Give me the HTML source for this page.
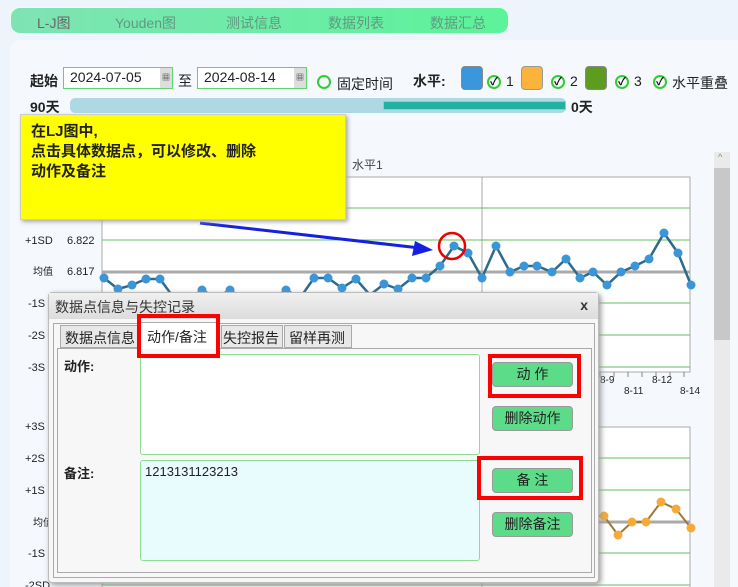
<!DOCTYPE html>
<html><head><meta charset="utf-8"><style>
*{box-sizing:border-box;margin:0;padding:0}
body{width:738px;height:587px;overflow:hidden;background:#eef4fb;font-family:"Liberation Sans","Noto Sans CJK SC",sans-serif;font-size:13px;color:#222;position:relative}
.a{position:absolute}
.tabs{left:10px;top:7px;width:499px;height:27px;border-radius:10px;background:linear-gradient(90deg,#7fe3b4,#5cf39a);border:1px solid #e8fff0}
.tabs span{position:absolute;top:5px;font-size:14px;color:#5f9a80}
.panel{left:10px;top:40px;width:728px;height:547px;background:#f5f9fe;border-radius:10px 0 0 0}
.inp{height:22px;border:1px solid #5fd36f;background:#fff;font-size:14px;padding:1px 6px}
.cal{position:absolute;right:0;top:0;width:12px;height:20px;background:#ddd;font-size:8px;text-align:center;line-height:20px}
.sw{width:22px;height:24px;border-radius:4px}
.ck{position:absolute;width:14px;height:14px;border:2px solid #3c3;border-radius:50%;font-size:11px;line-height:10px;text-align:center;font-weight:bold;color:#111}
.btn{position:absolute;left:492px;width:81px;height:25px;background:#5cdc88;border:1px solid #999;border-radius:4px;text-align:center;line-height:23px;font-size:14px;color:#222}
.red{position:absolute;border:4px solid #f00}
</style></head><body>
<div class="a tabs">
<span style="left:26px;color:#666">L-J图</span><span style="left:104px">Youden图</span><span style="left:215px">测试信息</span><span style="left:317px">数据列表</span><span style="left:419px">数据汇总</span>
</div>
<div class="a panel"></div>
<div class="a" style="left:30px;top:71px;font-size:14px;font-weight:bold">起始</div>
<div class="a inp" style="left:63px;top:67px;width:110px">2024-07-05<div class="cal">▦</div></div>
<div class="a" style="left:178px;top:71px;font-size:14px">至</div>
<div class="a inp" style="left:197px;top:67px;width:110px">2024-08-14<div class="cal">▦</div></div>
<div class="a" style="left:317px;top:75px;width:14px;height:14px;border:2px solid #3c3;border-radius:50%"></div>
<div class="a" style="left:337px;top:74px;font-size:14px">固定时间</div>
<div class="a" style="left:413px;top:71px;font-size:14px;font-weight:bold">水平:</div>
<div class="a sw" style="left:461px;top:66px;background:#3a97db;border:1px solid #888"></div>
<div class="ck" style="left:487px;top:75px">✓</div><div class="a" style="left:506px;top:73px;font-size:14px">1</div>
<div class="a sw" style="left:521px;top:66px;background:#fbb33c;border:1px solid #999"></div>
<div class="ck" style="left:551px;top:75px">✓</div><div class="a" style="left:570px;top:73px;font-size:14px">2</div>
<div class="a sw" style="left:585px;top:66px;background:#5e9c1f;border:1px solid #888"></div>
<div class="ck" style="left:615px;top:75px">✓</div><div class="a" style="left:634px;top:73px;font-size:14px">3</div>
<div class="ck" style="left:653px;top:75px">✓</div><div class="a" style="left:672px;top:73px;font-size:14px">水平重叠</div>
<div class="a" style="left:30px;top:97px;font-size:14px;font-weight:bold">90天</div>
<div class="a" style="left:70px;top:98px;width:496px;height:15px;background:#aed8e3;border-radius:5px"></div>
<div class="a" style="left:383px;top:101px;width:183px;height:9px;background:#22b0a0;border:1px solid #bbb"></div>
<div class="a" style="left:571px;top:97px;font-size:14px;font-weight:bold">0天</div>
<div class="a" style="left:714px;top:152px;width:16px;height:435px;background:#eaeaea"></div>
<div class="a" style="left:714px;top:168px;width:16px;height:172px;background:#c8c8c8"></div>
<div class="a" style="left:718px;top:152px;font-size:9px;color:#888">^</div>
<svg class="a" style="left:0;top:0" width="738" height="587">
<g font-size="11" fill="#222">
<text x="352" y="169" font-size="12" fill="#444">水平1</text>
<rect x="102" y="177" width="588" height="195" fill="#fff" stroke="#aaa"/>
<line x1="482" y1="177" x2="482" y2="372" stroke="#aaa"/>
<g stroke="#63c25d"><line x1="102" y1="208" x2="690" y2="208"/><line x1="102" y1="240" x2="690" y2="240"/><line x1="102" y1="303" x2="690" y2="303"/><line x1="102" y1="335" x2="690" y2="335"/><line x1="102" y1="367" x2="690" y2="367"/></g>
<line x1="102" y1="272" x2="690" y2="272" stroke="#aaa" stroke-width="3"/>
<text x="25" y="244">+1SD</text><text x="67" y="244">6.822</text>
<text x="33" y="275" font-size="10">均值</text><text x="67" y="275">6.817</text>
<text x="28" y="307">-1S</text><text x="28" y="339">-2S</text><text x="28" y="371">-3S</text>
<polyline fill="none" stroke="#2e6a8a" stroke-width="2.5" points="104,278 118,289 132,285 146,279 160,279 174,298 188,300 202,290 216,298 230,290 244,300 258,298 272,300 286,290 300,298 314,278 328,278 342,288 356,279 370,295 384,284 398,289 412,278 426,278 440,266 454,246 468,253 482,278 496,246 510,272 524,266 537,266 552,272 566,259 580,278 593,272 607,285 621,272 635,266 649,259 664,233 678,253 691,285"/>
<g fill="#3b96d8"><circle cx="104" cy="278" r="4.5"/><circle cx="118" cy="289" r="4.5"/><circle cx="132" cy="285" r="4.5"/><circle cx="146" cy="279" r="4.5"/><circle cx="160" cy="279" r="4.5"/><circle cx="202" cy="290" r="4.5"/><circle cx="230" cy="290" r="4.5"/><circle cx="286" cy="290" r="4.5"/><circle cx="314" cy="278" r="4.5"/><circle cx="328" cy="278" r="4.5"/><circle cx="342" cy="288" r="4.5"/><circle cx="356" cy="279" r="4.5"/><circle cx="384" cy="284" r="4.5"/><circle cx="398" cy="289" r="4.5"/><circle cx="412" cy="278" r="4.5"/><circle cx="426" cy="278" r="4.5"/><circle cx="440" cy="266" r="4.5"/><circle cx="454" cy="246" r="4.5"/><circle cx="468" cy="253" r="4.5"/><circle cx="482" cy="278" r="4.5"/><circle cx="496" cy="246" r="4.5"/><circle cx="510" cy="272" r="4.5"/><circle cx="524" cy="266" r="4.5"/><circle cx="537" cy="266" r="4.5"/><circle cx="552" cy="272" r="4.5"/><circle cx="566" cy="259" r="4.5"/><circle cx="580" cy="278" r="4.5"/><circle cx="593" cy="272" r="4.5"/><circle cx="607" cy="285" r="4.5"/><circle cx="621" cy="272" r="4.5"/><circle cx="635" cy="266" r="4.5"/><circle cx="649" cy="259" r="4.5"/><circle cx="664" cy="233" r="4.5"/><circle cx="678" cy="253" r="4.5"/><circle cx="691" cy="285" r="4.5"/></g>
<circle cx="452" cy="246" r="13" fill="none" stroke="#e00" stroke-width="2.5"/>
<g stroke="#888"><line x1="600" y1="372" x2="600" y2="377"/><line x1="614" y1="372" x2="614" y2="377"/><line x1="628" y1="372" x2="628" y2="377"/><line x1="642" y1="372" x2="642" y2="377"/><line x1="656" y1="372" x2="656" y2="377"/><line x1="670" y1="372" x2="670" y2="377"/><line x1="684" y1="372" x2="684" y2="377"/></g>
<text x="600" y="383" font-size="10">8-9</text><text x="652" y="383" font-size="10">8-12</text>
<text x="624" y="394" font-size="10">8-11</text><text x="680" y="394" font-size="10">8-14</text>
<rect x="102" y="427" width="588" height="170" fill="#fff" stroke="#aaa"/>
<line x1="482" y1="427" x2="482" y2="587" stroke="#aaa"/>
<g stroke="#63c25d"><line x1="102" y1="458" x2="690" y2="458"/><line x1="102" y1="490" x2="690" y2="490"/><line x1="102" y1="553" x2="690" y2="553"/><line x1="102" y1="585" x2="690" y2="585"/></g>
<line x1="102" y1="522" x2="690" y2="522" stroke="#aaa" stroke-width="3"/>
<text x="25" y="430">+3S</text><text x="25" y="462">+2S</text><text x="25" y="494">+1S</text><text x="33" y="526" font-size="10">均值</text><text x="28" y="557">-1S</text><text x="25" y="589">-2SD</text>
<polyline fill="none" stroke="#9a7a3a" stroke-width="2" points="598,516 604,516 618,535 632,522 646,522 661,502 676,509 691,528"/>
<g fill="#f7a93a"><circle cx="604" cy="516" r="4.5"/><circle cx="618" cy="535" r="4.5"/><circle cx="632" cy="522" r="4.5"/><circle cx="646" cy="522" r="4.5"/><circle cx="661" cy="502" r="4.5"/><circle cx="676" cy="509" r="4.5"/><circle cx="691" cy="528" r="4.5"/></g>
</g>
<line x1="200" y1="223" x2="420" y2="248" stroke="#1520e0" stroke-width="3"/>
<polygon points="433,250 412,256 415,241" fill="#1520e0"/>
</svg>
<div class="a" style="left:20px;top:114px;width:326px;height:106px;background:#ffff00;border:1px solid #ccc;box-shadow:2px 2px 4px #aaa;padding:7px 10px;font-size:15px;font-weight:bold;line-height:20px">在LJ图中,<br>点击具体数据点，可以修改、删除<br>动作及备注</div>
<div class="a" style="left:48px;top:292px;width:551px;height:291px;background:#f7f7f7;border:1px solid #bbb;border-radius:4px;box-shadow:2px 2px 6px #999">
<div style="height:26px;background:linear-gradient(#f0f0f0,#dcdcdc);padding:4px 6px;font-size:14px;color:#333">数据点信息与失控记录<span style="position:absolute;right:10px;top:4px;font-weight:bold">x</span></div>
<div style="position:absolute;left:4px;top:30px;width:542px;height:255px;border:1px solid #aaa"></div>
</div>
<div class="a" style="left:57px;top:348px;width:535px;height:225px;border:1px solid #aaa;background:#f7f7f7"></div>
<div class="a" style="left:60px;top:325px;width:80px;height:23px;border:1px solid #aaa;background:#e8e8e8;font-size:14px;padding:2px 4px;overflow:hidden;white-space:nowrap">数据点信息</div>
<div class="a" style="left:140px;top:322px;width:80px;height:27px;border:1px solid #aaa;border-bottom:none;background:#fff;font-size:14px;padding:4px 6px">动作/备注</div>
<div class="a" style="left:221px;top:325px;width:62px;height:23px;border:1px solid #aaa;background:#e8e8e8;font-size:14px;padding:2px 1px">失控报告</div>
<div class="a" style="left:284px;top:325px;width:68px;height:23px;border:1px solid #aaa;background:#e8e8e8;font-size:14px;padding:2px 4px">留样再测</div>
<div class="a" style="left:64px;top:356px;font-size:13px;font-weight:bold">动作:</div>
<div class="a" style="left:140px;top:354px;width:340px;height:101px;background:#fff;border:1px solid #8fdc96;border-radius:3px"></div>
<div class="a" style="left:64px;top:463px;font-size:13px;font-weight:bold">备注:</div>
<div class="a" style="left:140px;top:460px;width:340px;height:101px;background:#e8fbfd;border:1px solid #8fdc96;border-radius:3px;padding:3px 4px;font-size:13px">1213131123213</div>
<div class="btn" style="top:362px">动 作</div>
<div class="btn" style="top:406px">删除动作</div>
<div class="btn" style="top:468px">备 注</div>
<div class="btn" style="top:512px">删除备注</div>
<div class="red" style="left:137px;top:314px;width:83px;height:44px"></div>
<div class="red" style="left:488px;top:354px;width:93px;height:44px"></div>
<div class="red" style="left:477px;top:456px;width:106px;height:44px"></div>
</body></html>
